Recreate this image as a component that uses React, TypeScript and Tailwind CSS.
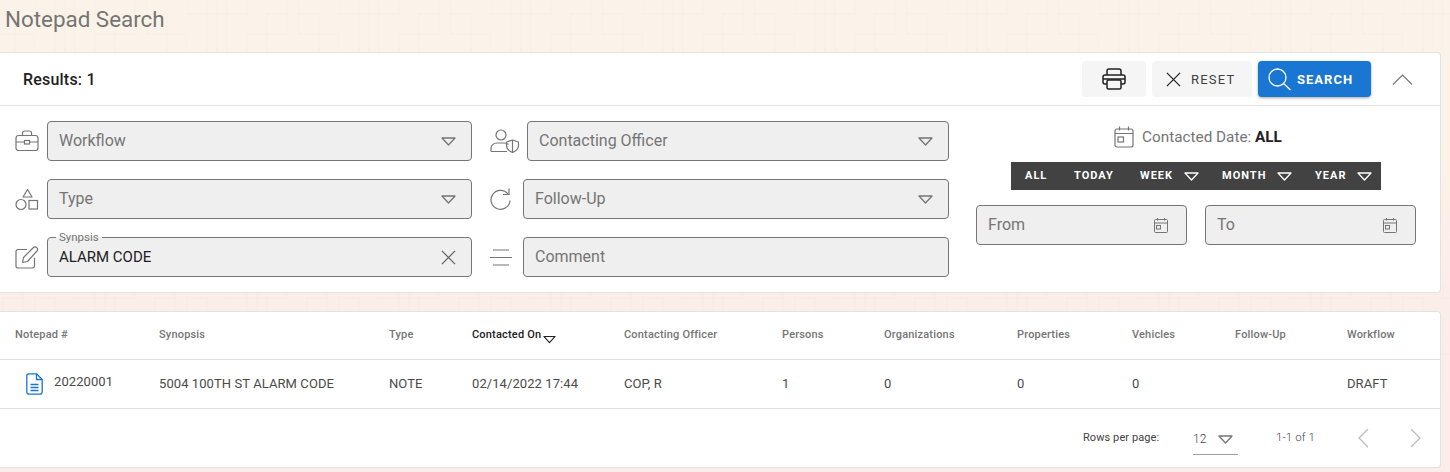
import React from 'react';

const Caret = ({ className = 'text-[#757575]' }: { className?: string }) => (
  <svg width="15" height="9" viewBox="0 0 15 9" fill="none" stroke="currentColor" strokeWidth="1.3" className={className}>
    <path d="M1 1h13L7.5 8z" strokeLinejoin="round" />
  </svg>
);

const CloseIcon = ({ size = 16, color = '#616161' }: { size?: number; color?: string }) => (
  <svg width={size} height={size} viewBox="0 0 16 16" fill="none" stroke={color} strokeWidth="1.3">
    <path d="M1 1l14 14M15 1L1 15" />
  </svg>
);

const CalendarSmall = () => (
  <svg width="16" height="17" viewBox="0 0 16 17" fill="none" stroke="#757575" strokeWidth="1">
    <rect x="1.5" y="2.5" width="13" height="13" rx="1" />
    <path d="M1.5 6h13M4.5 1v2.5M11.5 1v2.5" />
    <rect x="3.5" y="8.5" width="4" height="3.5" />
  </svg>
);

const BriefcaseIcon = () => (
  <svg width="24" height="22" viewBox="0 0 24 22" fill="none" stroke="#757575" strokeWidth="1.2">
    <rect x="1" y="5.5" width="22" height="15" rx="2.5" />
    <path d="M7.5 5.5V3a2 2 0 0 1 2-2h5a2 2 0 0 1 2 2v2.500M1 12h8.500M14.500 12H23" />
    <rect x="9.500" y="10.500" width="5" height="3.500" />
  </svg>
);

const ShapesIcon = () => (
  <svg width="24" height="23" viewBox="0 0 24 23" fill="none" stroke="#757575" strokeWidth="1.2">
    <path d="M12.500 1.500l4.500 7.500H8z" strokeLinejoin="round" />
    <circle cx="6" cy="16.500" r="5" />
    <rect x="14" y="12.500" width="8.500" height="8.500" />
  </svg>
);

const EditIcon = () => (
  <svg width="24" height="23" viewBox="0 0 24 23" fill="none" stroke="#757575" strokeWidth="1.2">
    <path d="M12 3.500H3a2 2 0 0 0-2 2V20a2 2 0 0 0 2 2h15a2 2 0 0 0 1.500-2v-8" />
    <path d="M7.500 16.500l1-5L18.500 1.500a2 2 0 0 1 3 0l.5.500a2 2 0 0 1 0 3L12.500 15.500z" strokeLinejoin="round" />
  </svg>
);

const OfficerIcon = () => (
  <svg width="30" height="24" viewBox="0 0 30 24" fill="none" stroke="#757575" strokeWidth="1.2">
    <circle cx="11" cy="6" r="5" />
    <path d="M1 22.500v-3c0-3 2.500-5.500 6-5.500h7c2 0 3.500.5 4.500 1.500M1 22.500h16" />
    <path d="M22.500 11l6 2v3.500c0 3-2.500 5.500-6 7-3.500-1.500-6-4-6-7V13zM22.500 11v12.500" strokeLinejoin="round" />
  </svg>
);

const RefreshIcon = () => (
  <svg width="21" height="23" viewBox="0 0 21 23" fill="none" stroke="#757575" strokeWidth="1.2">
    <path d="M18 6a9.500 9.500 0 1 0 2 6.500" />
    <path d="M19 .5V6.500h-6" />
  </svg>
);

const LinesIcon = () => (
  <svg width="22" height="17" viewBox="0 0 22 17" fill="none" stroke="#757575" strokeWidth="1.2">
    <path d="M3 1h16M0 8.500h22M3 16h16" />
  </svg>
);

const Field = ({ label, value, width, icon, caret, clear, floating }: {
  label?: string;
  value?: string;
  width: string;
  icon: React.ReactNode;
  caret?: boolean;
  clear?: boolean;
  floating?: string;
}) => (
  <div className="flex h-10 items-center">
    <div className={width === 'w-[422px]' ? 'flex w-[37px] justify-start' : width === 'w-[426px]' ? 'flex w-[33px] justify-start' : 'flex w-8 justify-start'}>
      {icon}
    </div>
    <div className={`relative flex h-10 items-center justify-between rounded-[4px] border border-[#757575] bg-[#efefef] pl-[11px] pr-[15px] text-base ${width}`}>
      {floating && (
        <span className="absolute left-[8px] top-[-8px] bg-[linear-gradient(#ffffff_50%,#efefef_50%)] px-[3px] text-[11.500px] leading-[14px] text-[#757575]">
          {floating}
        </span>
      )}
      {value ? <span className="text-[15px] text-[#212121]">{value}</span> : <span className="text-[#757575]">{label}</span>}
      {caret && <Caret />}
      {clear && <CloseIcon size={15} />}
    </div>
  </div>
);

const DateInput = ({ label }: { label: string }) => (
  <div className="flex h-10 w-[211px] items-center justify-between rounded-[4px] border border-[#757575] bg-[#efefef] pl-[11px] pr-[17px] text-base text-[#757575]">
    {label}
    <CalendarSmall />
  </div>
);

const RangeItem = ({ label, caret, className }: { label: string; caret?: boolean; className: string }) => (
  <div className={`flex items-center gap-[11px] text-[11px] font-bold tracking-[1px] text-white ${className}`}>
    <span className="pt-[1px]">{label}</span>
    {caret && <Caret className="text-white" />}
  </div>
);

const columns = [
  { label: 'Notepad #', w: 'w-[144px]', value: '' },
  { label: 'Synopsis', w: 'w-[230px]', value: '5004 100TH ST ALARM CODE' },
  { label: 'Type', w: 'w-[83px]', value: 'NOTE' },
  { label: 'Contacted On', w: 'w-[152px]', value: '02/14/2022 17:44' },
  { label: 'Contacting Officer', w: 'w-[158px]', value: 'COP, R' },
  { label: 'Persons', w: 'w-[102px]', value: '1' },
  { label: 'Organizations', w: 'w-[133px]', value: '0' },
  { label: 'Properties', w: 'w-[115px]', value: '0' },
  { label: 'Vehicles', w: 'w-[103px]', value: '0' },
  { label: 'Follow-Up', w: 'w-[112px]', value: '' },
  { label: 'Workflow', w: 'w-[80px]', value: 'DRAFT' },
];

// one 152px wide stretch of the maze lines, repeated across the page
const mazeLines =
  'M0 0v14h60V0M20 0v52M30 0v52M40 0v52M80 52V14h20M100 0v34H60v18M112 0v34M112 14h20v38M112 34h40v18';

const BackgroundPattern = () => (
  <svg className="absolute inset-0 h-full w-full" aria-hidden="true">
    <defs>
      <pattern id="maze" width="152" height="340" patternUnits="userSpaceOnUse" patternTransform="translate(35 0)">
        <g fill="none" stroke="#b48c5a" strokeOpacity="0.035" strokeWidth="1.500">
          <path d={mazeLines} />
          <path d={mazeLines} transform="translate(40 284)" />
          <path d={mazeLines} transform="translate(-112 284)" />
        </g>
      </pattern>
    </defs>
    <rect width="100%" height="100%" fill="url(#maze)" />
  </svg>
);

export default function App() {
  return (
    <div className="relative h-[472px] w-[1450px] overflow-hidden bg-[linear-gradient(180deg,#fbf3e9_0%,#fbf2e8_35%,#fbeeea_62%,#fbeeea_100%)] font-['Roboto',sans-serif]">
      <BackgroundPattern />
      <div className="relative">
        <h1 className="h-[52px] pl-[5px] pt-[5px] text-[22.400px] leading-[28px] text-[#757575]">Notepad Search</h1>

        <section className="h-[241px] w-[1441px] rounded-r-[4px] border-y border-r border-[#e2e2e2] bg-white">
          <div className="flex h-[53px] items-center justify-between border-b border-[#e0e0e0] pl-[23px] pr-[27px]">
            <div className="pt-[2px] text-base font-medium tracking-[0.200px] text-[#212121]">Results: 1</div>
            <div className="flex items-center">
              <button className="flex h-9 w-16 items-center justify-center rounded-[4px] bg-[#f5f5f5]">
                <svg width="24" height="22" viewBox="0 0 24 22" fill="none" stroke="#212121" strokeWidth="1.500">
                  <path d="M5 7V3a2 2 0 0 1 2-2h10a2 2 0 0 1 2 2v4" />
                  <path d="M5 16H3a2 2 0 0 1-2-2V9a2 2 0 0 1 2-2h18a2 2 0 0 1 2 2v5a2 2 0 0 1-2 2h-2" />
                  <rect x="5" y="12" width="14" height="9" rx="1.500" />
                  <path d="M1 11h22" />
                </svg>
              </button>
              <button className="ml-[6px] flex h-9 w-[100px] items-center rounded-[4px] bg-[#f5f5f5] pl-[14px] text-[13px] tracking-[1.200px] text-[#424242]">
                <CloseIcon size={15} color="#212121" />
                <span className="ml-[10px] pt-[1px]">RESET</span>
              </button>
              <button className="ml-[6px] flex h-9 w-[113px] items-center rounded-[4px] bg-[#1976d2] pl-[10px] text-[13px] font-bold tracking-[1px] text-white shadow-[0_1px_3px_rgba(0,0,0,0.35)]">
                <svg width="23" height="23" viewBox="0 0 23 23" fill="none" stroke="#ffffff" strokeWidth="1.300">
                  <circle cx="9.500" cy="9.500" r="8.500" />
                  <path d="M15.500 15.500l7 6.500" />
                </svg>
                <span className="ml-[6px] pt-[1px]">SEARCH</span>
              </button>
              <svg className="ml-[21px]" width="21" height="11" viewBox="0 0 21 11" fill="none" stroke="#757575" strokeWidth="1.200">
                <path d="M1 10.500L10.500 1 20 10.500" />
              </svg>
            </div>
          </div>

          <div className="flex pl-[15px] pt-[15px]">
            <div className="flex flex-col gap-[18px]">
              <Field label="Workflow" width="w-[425px]" icon={<BriefcaseIcon />} caret />
              <Field label="Type" width="w-[425px]" icon={<ShapesIcon />} caret />
              <Field value="ALARM CODE" floating="Synpsis" width="w-[425px]" icon={<EditIcon />} clear />
            </div>
            <div className="ml-[18px] flex flex-col gap-[18px]">
              <Field label="Contacting Officer" width="w-[422px]" icon={<OfficerIcon />} caret />
              <Field label="Follow-Up" width="w-[426px]" icon={<RefreshIcon />} caret />
              <Field label="Comment" width="w-[426px]" icon={<LinesIcon />} />
            </div>
            <div className="ml-[27px] flex w-[440px] flex-col items-center pt-[5px]">
              <div className="flex h-[22px] items-center gap-[8px] pl-[4px] text-[15.300px] text-[#757575]">
                <svg width="20" height="22" viewBox="0 0 20 22" fill="none" stroke="#757575" strokeWidth="1.200">
                  <rect x="1" y="3" width="18" height="18" rx="2" />
                  <path d="M1 7.500h18M5.500 .5v4M14.500 .5v4" />
                  <rect x="4" y="11" width="5.500" height="5" />
                </svg>
                <span>Contacted Date: <span className="font-bold text-[#212121]">ALL</span></span>
              </div>
              <div className="mt-[14px] flex h-[28px] w-[370px] items-center bg-[#424242] pl-[14px]">
                <RangeItem label="ALL" className="w-[49px]" />
                <RangeItem label="TODAY" className="w-[66px]" />
                <RangeItem label="WEEK" caret className="w-[82px]" />
                <RangeItem label="MONTH" caret className="w-[93px]" />
                <RangeItem label="YEAR" caret className="w-[66px]" />
              </div>
              <div className="mt-[15px] flex w-full gap-[18px]">
                <DateInput label="From" />
                <DateInput label="To" />
              </div>
            </div>
          </div>
        </section>

        <section className="mt-[18px] h-[157px] w-[1441px] rounded-r-[4px] border-y border-r border-[#e2e2e2] bg-white text-[13px] tracking-[0.080px] text-[#4a4a4a]">
          <div className="flex h-[48px] items-center border-b border-[#e0e0e0] pl-[15px] text-[11px] font-medium tracking-[0.180px] text-[#757575]">
            {columns.map((col) => (
              <div key={col.label} className={col.w}>
                {col.label === 'Contacted On' ? (
                  <span className="flex items-center gap-[2px] text-[#212121]">
                    {col.label}
                    <span className="mt-[7px]"><Caret className="w-[13px] text-[#212121]" /></span>
                  </span>
                ) : col.label}
              </div>
            ))}
          </div>
          <div className="flex h-[49px] items-center border-b border-[#e0e0e0] pl-[15px]">
            {columns.map((col, i) => (
              <div key={col.label} className={col.w}>
                {i === 0 ? (
                  <div className="flex items-center pl-[11px]">
                    <svg width="17" height="22" viewBox="0 0 17 22" fill="none" stroke="#1976d2" strokeWidth="1.300">
                      <path d="M3 .8h7.500L16.200 6.500V19a2.200 2.200 0 0 1-2.200 2.200H3A2.200 2.200 0 0 1 .8 19V3A2.200 2.200 0 0 1 3 .8z" strokeLinejoin="round" />
                      <path d="M10.500 .8V6.500h5.700M4.500 11.500h8M4.500 14.500h8M4.500 17.500h8" />
                    </svg>
                    <span className="ml-[11px] -translate-y-[2px]">20220001</span>
                  </div>
                ) : col.value}
              </div>
            ))}
          </div>
          <div className="flex h-[58px] items-center pl-[1083px] text-[11px] text-[#424242]">
            <span className="w-[110px]">Rows per page:</span>
            <div className="flex h-[34px] w-[45px] items-center justify-between border-b border-[#9e9e9e] pr-[5px] pt-[3px] text-xs font-light">
              12
              <Caret />
            </div>
            <span className="ml-[38px] w-[81px] text-[11.500px] font-light">1-1 of 1</span>
            <svg width="13" height="20" viewBox="0 0 13 20" fill="none" stroke="#bdbdbd" strokeWidth="1.300">
              <path d="M11 1L2 10l9 9" />
            </svg>
            <svg className="ml-[39px]" width="13" height="20" viewBox="0 0 13 20" fill="none" stroke="#bdbdbd" strokeWidth="1.300">
              <path d="M2 1l9 9-9 9" />
            </svg>
          </div>
        </section>
      </div>
    </div>
  );
}
